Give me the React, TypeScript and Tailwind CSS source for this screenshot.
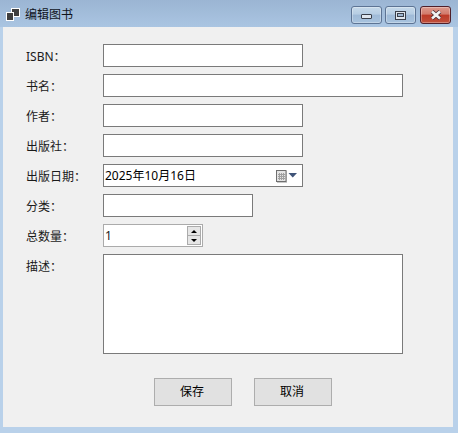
import React from 'react';

const font = { fontFamily: '"Noto Sans", "Noto Sans CJK SC", sans-serif' };

const rows = [
  { label: 'ISBN：', width: 'w-[200px]' },
  { label: '书名：', width: 'w-[300px]' },
  { label: '作者：', width: 'w-[200px]' },
  { label: '出版社：', width: 'w-[200px]' },
];

const Label: React.FC<{ text: string }> = ({ text }) => (
  <div className="h-[23px] w-[77px] shrink-0 text-[12px] leading-[25px] text-[#1a1a1a]">{text}</div>
);

const WinButton: React.FC<{ close?: boolean; children: React.ReactNode }> = ({ close, children }) => (
  <div
    className={`flex h-[18px] w-[31px] items-center justify-center rounded-[3px] border ${
      close
        ? 'border-[#4f1f2a] bg-[linear-gradient(#dc9a8e_0%,#d27a6b_45%,#bd3a28_50%,#c0503c_100%)]'
        : 'border-[#5d7494] bg-[linear-gradient(#c6d9ea_0%,#b6cde3_45%,#9fbad7_50%,#a8c3de_100%)]'
    } shadow-[inset_0_0_0_1px_rgba(255,255,255,0.3)]`}
  >
    {children}
  </div>
);

export default function App() {
  return (
    <div
      style={font}
      className="flex h-[433px] w-[458px] flex-col overflow-hidden bg-[#b9d1ea]"
    >
      {/* title bar */}
      <div className="flex h-[27px] shrink-0 items-start bg-gradient-to-b from-[#9bb5d3] to-[#aac5e2] pl-[6px] pr-[7px]">
        <svg width="14" height="14" viewBox="0 0 14 14" className="mt-[8px] shrink-0">
          <rect x="5.5" y="0.5" width="8" height="8" fill="#3f3f3f" stroke="#fff" />
          <rect x="0.5" y="4.5" width="7" height="8" fill="#3f3f3f" stroke="#fff" />
        </svg>
        <span className="ml-[5px] mt-[6px] text-[12px] leading-[18px] text-[#10141c]">编辑图书</span>
        <div className="ml-auto mt-[6px] flex">
          <WinButton>
            <div className="mt-[3px] h-[5px] w-[11px] rounded-[1px] border border-[#3a3f4a] bg-[#dfe6ee]" />
          </WinButton>
          <div className="ml-[3px]">
            <WinButton>
              <div className="flex h-[9px] w-[11px] items-center justify-center border border-[#3a3f4a] bg-[#dfe6ee]">
                <div className="h-[4px] w-[7px] border border-[#3a3f4a] bg-[#9fb8d2]" />
              </div>
            </WinButton>
          </div>
          <div className="ml-[4px]">
            <WinButton close>
              <svg width="12" height="10" viewBox="0 0 12 10">
                <path d="M2 1.5 L10 8.5 M10 1.5 L2 8.5" stroke="#4a2c32" strokeWidth="4.2" />
                <path d="M2 1.5 L10 8.5 M10 1.5 L2 8.5" stroke="#f2f2f2" strokeWidth="2.6" />
              </svg>
            </WinButton>
          </div>
        </div>
      </div>

      {/* client area */}
      <div className="ml-[3px] h-[400px] w-[450px] bg-[#f0f0f0] pl-[23px] pt-[17px]">
        <div className="flex flex-col gap-[7px]">
          {rows.map((r) => (
            <div key={r.label} className="flex">
              <Label text={r.label} />
              <div className={`h-[23px] ${r.width} border border-[#7a7a7a] bg-white`} />
            </div>
          ))}

          <div className="flex">
            <Label text="出版日期：" />
            <div className="flex h-[23px] w-[200px] items-center border border-[#7a7a7a] bg-white pl-[1px] text-[12px] text-black">
              <span>2025年10月16日</span>
              <svg width="27" height="14" viewBox="0 0 27 14" className="ml-auto mr-[1px]">
                <rect x="3" y="2" width="10" height="12" fill="#c8c8c8" />
                <rect x="2.5" y="1.5" width="9.5" height="11" fill="#e4e4e4" stroke="#6f6f6f" />
                <path d="M4 5.5h7M4 7.5h7M4 9.5h7M5.5 4v7M7.5 4v7M9.5 4v7" stroke="#a0a0a0" />
                <path d="M14.5 4h8.5l-4.25 4.5z" fill="#3f5478" />
              </svg>
            </div>
          </div>

          <div className="flex">
            <Label text="分类：" />
            <div className="h-[23px] w-[150px] border border-[#7a7a7a] bg-white" />
          </div>

          <div className="flex">
            <Label text="总数量：" />
            <div className="flex h-[23px] w-[100px] items-center border border-[#ababab] bg-white pl-[1px] pr-[1px] text-[12px] text-[#1a1a1a]">
              <span>1</span>
              <div className="ml-auto flex h-[19px] w-[14px] flex-col">
                <div className="flex flex-1 items-center justify-center border border-[#ababab] bg-[#e6e6e6]">
                  <div className="h-0 w-0 border-x-[3.5px] border-b-[3.5px] border-x-transparent border-b-black" />
                </div>
                <div className="-mt-px flex flex-1 items-center justify-center border border-[#ababab] bg-[#e6e6e6]">
                  <div className="h-0 w-0 border-x-[3.5px] border-t-[3.5px] border-x-transparent border-t-black" />
                </div>
              </div>
            </div>
          </div>

          <div className="flex">
            <Label text="描述：" />
            <div className="h-[100px] w-[300px] border border-[#7a7a7a] bg-white" />
          </div>
        </div>

        {/* buttons */}
        <div className="ml-[128px] mt-[24px] flex gap-[22px]">
          <button className="h-[28px] w-[78px] border border-[#adadad] bg-[#e1e1e1] pr-[2px] text-[12px] text-black">保存</button>
          <button className="h-[28px] w-[78px] border border-[#adadad] bg-[#e1e1e1] pr-[2px] text-[12px] text-black">取消</button>
        </div>
      </div>
    </div>
  );
}
